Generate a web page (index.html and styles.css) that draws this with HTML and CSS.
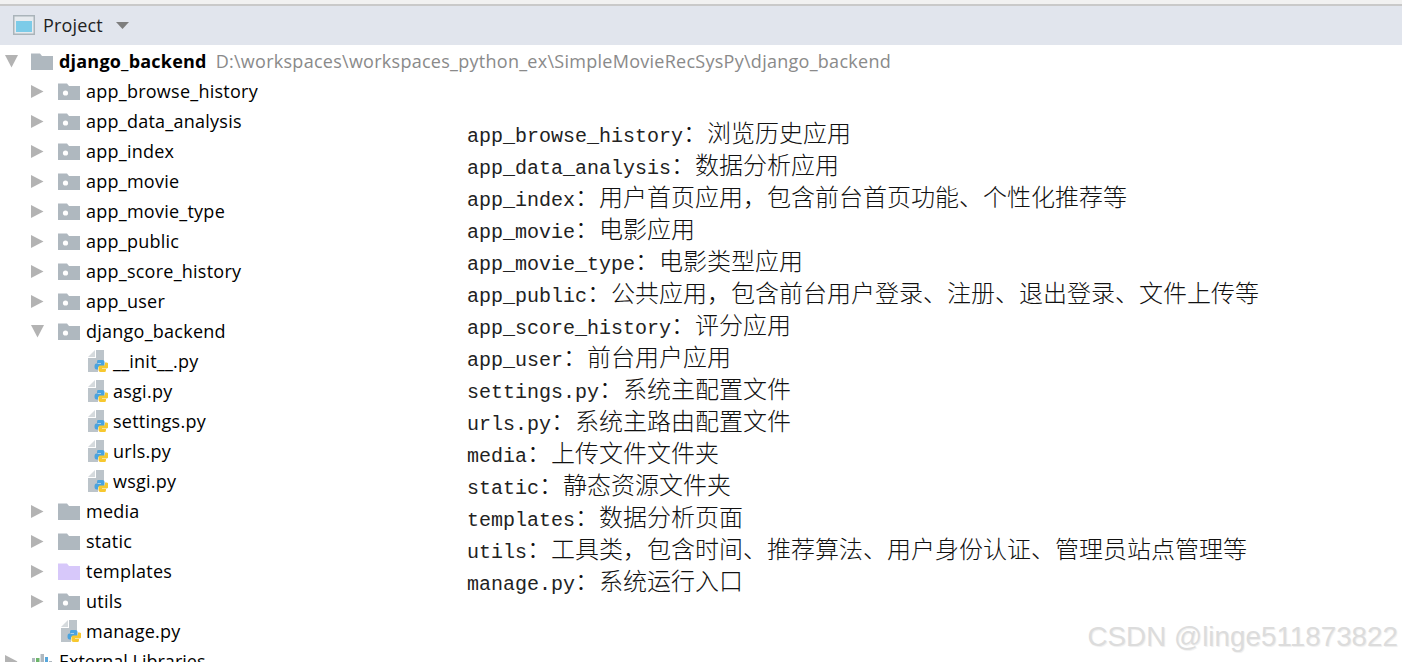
FILE: index.html
```html
<!DOCTYPE html>
<html lang="zh-CN">
<head>
<meta charset="utf-8">
<title>Project</title>
<link rel="stylesheet" href="styles.css">
</head>
<body>
<svg class="defs" width="0" height="0" aria-hidden="true">
  <symbol id="arrow-right" viewBox="0 0 13 13"><path d="M0 0L12.500 6.500L0 13Z" fill="#b3b3b3"/></symbol>
  <symbol id="arrow-down" viewBox="0 0 13 13"><path d="M0 0H13L6.500 12.500Z" fill="#b3b3b3"/></symbol>
  <symbol id="folder" viewBox="0 0 22 18"><path d="M0 1.500H9L11 4H22V18H0Z" fill="#afb8bf"/></symbol>
  <symbol id="folder-purple" viewBox="0 0 22 18"><path d="M0 1.500H9L11 4H22V18H0Z" fill="#d7c8fa"/></symbol>
  <symbol id="package" viewBox="0 0 22 18"><path d="M0 1.500H9L11 4H22V18H0Z" fill="#afb8bf"/><circle cx="7.500" cy="11" r="2.600" fill="#fff"/></symbol>
  <symbol id="python" viewBox="0 0 20 22">
    <path d="M8 0H16V11H10V22H0V8H8Z" fill="#bcc4ca"/>
    <path d="M0 7L7 0V7Z" fill="#d5dadd"/>
    <path d="M10 10H14.500Q16.500 10 16.500 12V15Q16.500 16.500 15 16.500H11.500Q10 16.500 10 18V19.500H8.500Q6.500 19.500 6.500 16.500Q6.500 13.500 8.500 13.500H13V13H9V12Q9 10 10 10Z" fill="#4aa3df"/>
    <path d="M10 10H14.500Q16.500 10 16.500 12V15Q16.500 16.500 15 16.500H11.500Q10 16.500 10 18V19.500H8.500Q6.500 19.500 6.500 16.500Q6.500 13.500 8.500 13.500H13V13H9V12Q9 10 10 10Z" fill="#f7c830" transform="rotate(180 13.500 16)"/>
  </symbol>
  <symbol id="libs" viewBox="0 0 22 18">
    <rect x="1" y="6" width="3" height="12" fill="#afb8bf"/><rect x="5" y="6" width="3.500" height="12" fill="#6db56a"/><rect x="9.500" y="2" width="3.500" height="16" fill="#afb8bf"/><rect x="14" y="5" width="3" height="13" fill="#57a7dc"/><rect x="18" y="9" width="3" height="9" fill="#afb8bf"/>
  </symbol>
</svg>

<header class="toolbar">
  <svg class="window-icon" viewBox="0 0 22 20" aria-hidden="true"><rect width="22" height="20" fill="#aab4ba"/><rect x="1.500" y="1.500" width="19" height="17" fill="#e6eaee"/><rect x="3" y="6" width="16" height="11" fill="#7ccbe8"/></svg>
  <span class="toolbar-title">Project</span>
  <svg class="toolbar-caret" viewBox="0 0 13 7" aria-hidden="true"><path d="M0 0H13L6.500 7Z" fill="#7e7e7e"/></svg>
</header>

<main class="workspace">
  <ul class="tree">
    <li class="row level-0"><svg class="arrow"><use href="#arrow-down"/></svg><svg class="icon"><use href="#folder"/></svg><span class="name root-name">django_backend</span><span class="path">D:\workspaces\workspaces_python_ex\SimpleMovieRecSysPy\django_backend</span></li>
    <li class="row level-1"><svg class="arrow"><use href="#arrow-right"/></svg><svg class="icon"><use href="#package"/></svg><span class="name">app_browse_history</span></li>
    <li class="row level-1"><svg class="arrow"><use href="#arrow-right"/></svg><svg class="icon"><use href="#package"/></svg><span class="name">app_data_analysis</span></li>
    <li class="row level-1"><svg class="arrow"><use href="#arrow-right"/></svg><svg class="icon"><use href="#package"/></svg><span class="name">app_index</span></li>
    <li class="row level-1"><svg class="arrow"><use href="#arrow-right"/></svg><svg class="icon"><use href="#package"/></svg><span class="name">app_movie</span></li>
    <li class="row level-1"><svg class="arrow"><use href="#arrow-right"/></svg><svg class="icon"><use href="#package"/></svg><span class="name">app_movie_type</span></li>
    <li class="row level-1"><svg class="arrow"><use href="#arrow-right"/></svg><svg class="icon"><use href="#package"/></svg><span class="name">app_public</span></li>
    <li class="row level-1"><svg class="arrow"><use href="#arrow-right"/></svg><svg class="icon"><use href="#package"/></svg><span class="name">app_score_history</span></li>
    <li class="row level-1"><svg class="arrow"><use href="#arrow-right"/></svg><svg class="icon"><use href="#package"/></svg><span class="name">app_user</span></li>
    <li class="row level-1"><svg class="arrow"><use href="#arrow-down"/></svg><svg class="icon"><use href="#package"/></svg><span class="name">django_backend</span></li>
    <li class="row level-2"><svg class="file-icon"><use href="#python"/></svg><span class="name">__init__.py</span></li>
    <li class="row level-2"><svg class="file-icon"><use href="#python"/></svg><span class="name">asgi.py</span></li>
    <li class="row level-2"><svg class="file-icon"><use href="#python"/></svg><span class="name">settings.py</span></li>
    <li class="row level-2"><svg class="file-icon"><use href="#python"/></svg><span class="name">urls.py</span></li>
    <li class="row level-2"><svg class="file-icon"><use href="#python"/></svg><span class="name">wsgi.py</span></li>
    <li class="row level-1"><svg class="arrow"><use href="#arrow-right"/></svg><svg class="icon"><use href="#folder"/></svg><span class="name">media</span></li>
    <li class="row level-1"><svg class="arrow"><use href="#arrow-right"/></svg><svg class="icon"><use href="#folder"/></svg><span class="name">static</span></li>
    <li class="row level-1"><svg class="arrow"><use href="#arrow-right"/></svg><svg class="icon"><use href="#folder-purple"/></svg><span class="name">templates</span></li>
    <li class="row level-1"><svg class="arrow"><use href="#arrow-right"/></svg><svg class="icon"><use href="#package"/></svg><span class="name">utils</span></li>
    <li class="row level-file"><svg class="file-icon"><use href="#python"/></svg><span class="name">manage.py</span></li>
    <li class="row level-0"><svg class="arrow"><use href="#arrow-right"/></svg><svg class="icon"><use href="#libs"/></svg><span class="name libs-name">External Libraries</span></li>
  </ul>

  <section class="notes">
    <p class="note"><span class="code">app_browse_history</span>：浏览历史应用</p>
    <p class="note"><span class="code">app_data_analysis</span>：数据分析应用</p>
    <p class="note"><span class="code">app_index</span>：用户首页应用，包含前台首页功能、个性化推荐等</p>
    <p class="note"><span class="code">app_movie</span>：电影应用</p>
    <p class="note"><span class="code">app_movie_type</span>：电影类型应用</p>
    <p class="note"><span class="code">app_public</span>：公共应用，包含前台用户登录、注册、退出登录、文件上传等</p>
    <p class="note"><span class="code">app_score_history</span>：评分应用</p>
    <p class="note"><span class="code">app_user</span>：前台用户应用</p>
    <p class="note"><span class="code">settings.py</span>：系统主配置文件</p>
    <p class="note"><span class="code">urls.py</span>：系统主路由配置文件</p>
    <p class="note"><span class="code">media</span>：上传文件文件夹</p>
    <p class="note"><span class="code">static</span>：静态资源文件夹</p>
    <p class="note"><span class="code">templates</span>：数据分析页面</p>
    <p class="note"><span class="code">utils</span>：工具类，包含时间、推荐算法、用户身份认证、管理员站点管理等</p>
    <p class="note"><span class="code">manage.py</span>：系统运行入口</p>
  </section>
</main>

<div class="watermark">CSDN @linge511873822</div>
</body>
</html>
```

FILE: styles.css
```css
* {
  box-sizing: border-box;
}

html,
body {
  height: 100%;
}

body {
  margin: 0;
  overflow: hidden;
  background: #fff;
  color: #000;
  font-family: "Open Sans", "Noto Sans", sans-serif;
  position: relative;
}

.defs {
  position: absolute;
}

.toolbar {
  display: flex;
  align-items: center;
  height: 45px;
  padding: 0 0 0 13px;
  background: #e1e5ed;
  border-top: 4px solid #f1f1f1;
  box-shadow: inset 0 2px 0 #c9c9c9;
}

.window-icon {
  width: 22px;
  height: 20px;
  flex: none;
}

.toolbar-title {
  margin-left: 8px;
  font-size: 18px;
  letter-spacing: 0.15px;
  color: #222;
}

.toolbar-caret {
  width: 13px;
  height: 7px;
  margin-left: 13px;
  margin-top: 2px;
}

.workspace {
  display: flex;
}

.tree {
  list-style: none;
  margin: 0;
  padding: 1px 0 0;
  width: 467px;
  flex: none;
}

.row {
  display: flex;
  align-items: center;
  height: 30px;
  white-space: nowrap;
  font-size: 18px;
}

.level-0 {
  padding-left: 5px;
}

.level-1 {
  padding-left: 31px;
}

.level-2 {
  padding-left: 88px;
}

.level-file {
  padding-left: 61px;
}

.arrow {
  width: 13px;
  height: 13px;
  flex: none;
}

.icon {
  width: 22px;
  height: 18px;
  margin-left: 14px;
  flex: none;
}

.file-icon {
  width: 20px;
  height: 22px;
  flex: none;
}

.name {
  margin-left: 6px;
  letter-spacing: 0.25px;
}

.level-2 .name,
.level-file .name {
  margin-left: 5px;
}

.level-0 .icon {
  margin-left: 13px;
}

.root-name {
  font-weight: 700;
  letter-spacing: 0.2px;
}

.libs-name {
  letter-spacing: 0;
}

.path {
  margin-left: 9px;
  color: #8a8a8a;
  letter-spacing: 0.27px;
}

.notes {
  padding-top: 71px;
}

.note {
  margin: 0;
  height: 32px;
  line-height: 32px;
  white-space: nowrap;
  font-size: 24px;
  font-weight: 300;
  font-family: "Noto Sans CJK SC", serif;
  color: #111;
}

.code {
  font-family: "Liberation Mono", monospace;
  font-size: 20px;
  font-weight: 400;
  color: #222;
}

.watermark {
  position: absolute;
  right: 4px;
  bottom: 9px;
  font-family: "Liberation Sans", sans-serif;
  font-size: 27.8px;
  color: #dcdcdc;
  text-shadow: 1px 1px 1px #eeeeee;
}
```
